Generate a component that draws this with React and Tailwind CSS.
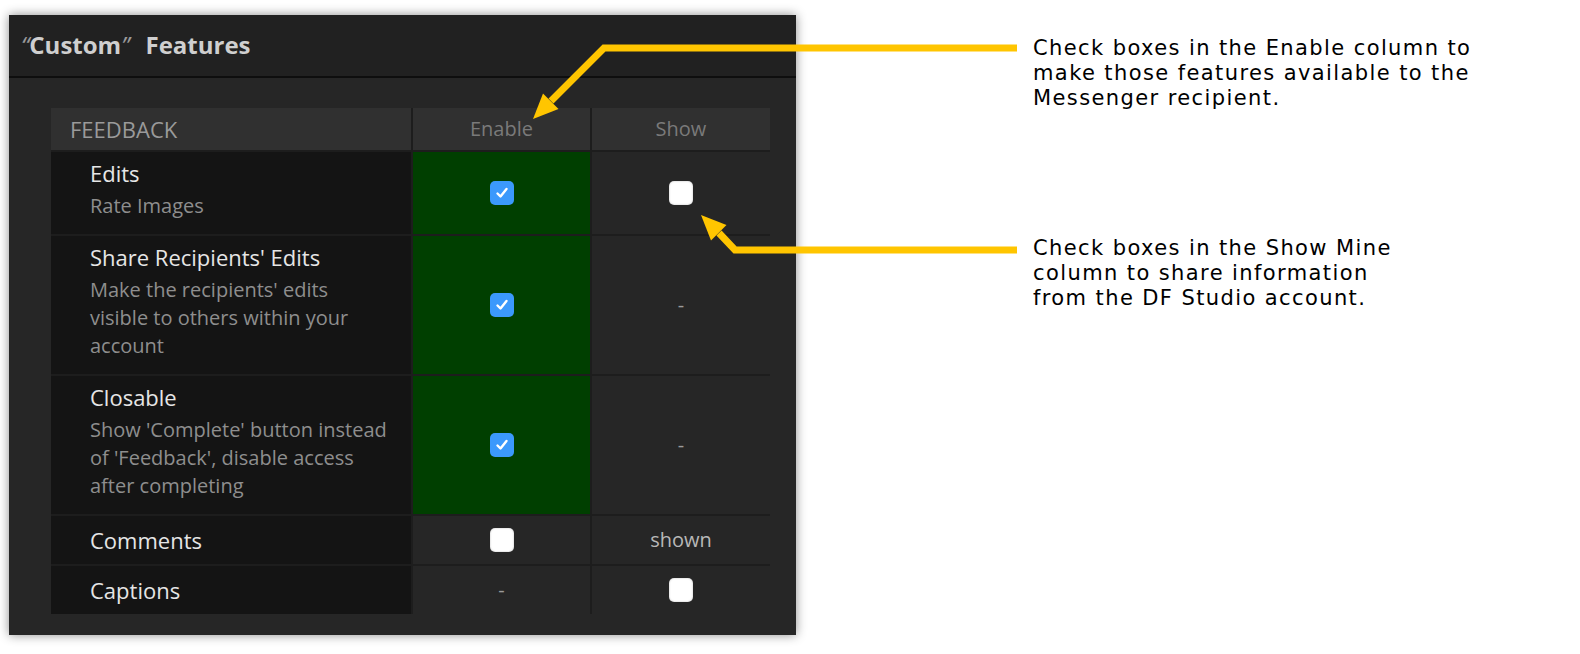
import React from 'react';

const rows = [
  { title: 'Edits', desc: ['Rate Images'], enable: 'on', show: 'off', h: 'h-[82px]', green: true },
  { title: "Share Recipients' Edits", desc: ["Make the recipients' edits", 'visible to others within your', 'account'], enable: 'on', show: '-', h: 'h-[138px]', green: true },
  { title: 'Closable', desc: ["Show 'Complete' button instead", "of 'Feedback', disable access", 'after completing'], enable: 'on', show: '-', h: 'h-[138px]', green: true },
  { title: 'Comments', desc: [], enable: 'off', show: 'shown', h: 'h-[48px]', green: false },
  { title: 'Captions', desc: [], enable: '-', show: 'off', h: 'h-[48px]', green: false },
];

const Check = ({ on }) =>
  on ? (
    <span className="flex h-6 w-6 items-center justify-center rounded-[5px] bg-[#3b99fc]">
      <svg width="14" height="14" viewBox="0 0 14 14">
        <path d="M2.5 7.5 L5.5 10.5 L11.5 3" fill="none" stroke="#fff" strokeWidth="2.4" strokeLinecap="round" strokeLinejoin="round" />
      </svg>
    </span>
  ) : (
    <span className="block h-6 w-6 rounded-[5px] bg-white shadow-[inset_0_0_2px_rgba(0,0,0,0.3)]" />
  );

const Value = ({ v }) => {
  if (v === 'on') return <Check on />;
  if (v === 'off') return <Check on={false} />;
  if (v === '-') return <span className="text-[20px] text-[#9a9a9a]">-</span>;
  return <span className="text-[20px] text-[#b8b8b8]">{v}</span>;
};

export default function App() {
  return (
    <div className="relative h-[654px] w-[1580px] overflow-hidden bg-white font-['Open_Sans',sans-serif]">
      {/* panel */}
      <div className="ml-[9px] mt-[15px] flex h-[620px] w-[787px] flex-col bg-[#262626] shadow-[0_0_10px_rgba(0,0,0,0.45)]">
        <div className="flex h-[63px] shrink-0 items-center border-b-2 border-[#0e0e0e] bg-[#212121] pl-[12px] pb-[2px] text-[24px] font-bold text-[#cfcfcf]">
          <span className="font-normal italic text-[#9a9a9a]">“</span>
          <span>Custom</span>
          <span className="font-normal italic text-[#9a9a9a]">”</span>
          <span className="ml-[16px]">Features</span>
        </div>

        <div className="pl-[42px] pt-[30px]">
          <div className="grid w-[719px] grid-cols-[360px_177px_178px] gap-[2px] bg-[#1d1d1d]">
            <div className="flex h-[42px] items-center bg-[#303030] pl-[19px] text-[22px] uppercase text-[#9a9a9a]">Feedback</div>
            <div className="flex h-[42px] items-center justify-center bg-[#303030] text-[20px] text-[#7a7a7a]">Enable</div>
            <div className="flex h-[42px] items-center justify-center bg-[#303030] text-[20px] text-[#7a7a7a]">Show</div>

            {rows.map((r) => (
              <React.Fragment key={r.title}>
                <div className={`${r.h} bg-[#141414] pl-[39px] ${r.desc.length ? 'pt-[6px]' : 'flex items-center'}`}>
                  <div className="text-[22px] leading-[30px] text-[#e6e6e6]">{r.title}</div>
                  {r.desc.length > 0 && (
                    <div className="mt-1 text-[20px] leading-[28px] text-[#8e8e8e]">
                      {r.desc.map((d) => (
                        <div key={d}>{d}</div>
                      ))}
                    </div>
                  )}
                </div>
                <div className={`${r.h} flex items-center justify-center ${r.green ? 'bg-[#003f00]' : 'bg-[#262626]'}`}>
                  <Value v={r.enable} />
                </div>
                <div className={`${r.h} flex items-center justify-center bg-[#262626]`}>
                  <Value v={r.show} />
                </div>
              </React.Fragment>
            ))}
          </div>
        </div>
      </div>

      {/* callout arrows */}
      <svg className="pointer-events-none absolute left-0 top-0" width="1580" height="654">
        <polyline points="1017,48 604,48 551,101" fill="none" stroke="#ffc500" strokeWidth="7" strokeLinejoin="miter" />
        <polygon points="533,119 543,93.5 558.5,109" fill="#ffc500" />
        <polyline points="1017,250 735,250 719,233" fill="none" stroke="#ffc500" strokeWidth="7" strokeLinejoin="miter" />
        <polygon points="701,215 726.5,225 711,240.5" fill="#ffc500" />
      </svg>

      {/* callout notes */}
      <div className="absolute left-[1033px] top-[36px] font-['DejaVu_Sans',sans-serif] text-[21px] leading-[25px] tracking-[1.4px] text-black">
        <div>Check boxes in the Enable column to</div>
        <div>make those features available to the</div>
        <div>Messenger recipient.</div>
      </div>
      <div className="absolute left-[1033px] top-[236px] font-['DejaVu_Sans',sans-serif] text-[21px] leading-[25px] tracking-[1.4px] text-black">
        <div>Check boxes in the Show Mine</div>
        <div>column to share information</div>
        <div>from the DF Studio account.</div>
      </div>
    </div>
  );
}
